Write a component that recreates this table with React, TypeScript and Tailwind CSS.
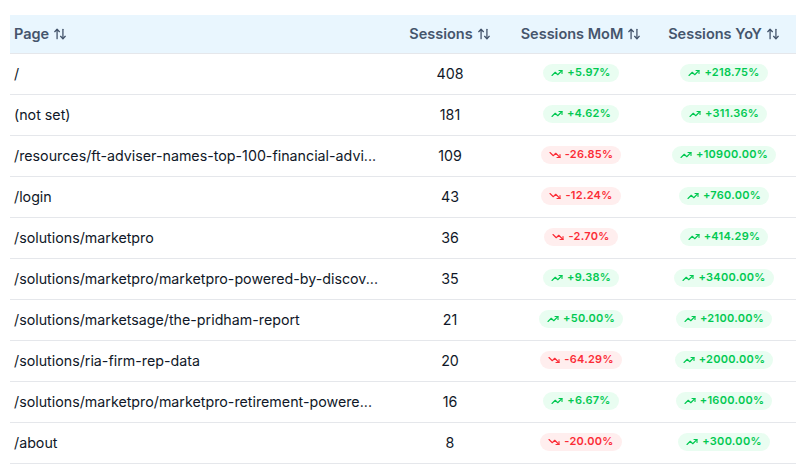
import React from 'react';
import { ArrowUpDown, TrendingUp, TrendingDown } from 'lucide-react';

interface Row {
  page: string;
  sessions: number;
  mom: number;
  yoy: number;
}

const rows: Row[] = [
  { page: '/', sessions: 408, mom: 5.97, yoy: 218.75 },
  { page: '(not set)', sessions: 181, mom: 4.62, yoy: 311.36 },
  { page: '/resources/ft-adviser-names-top-100-financial-advi...', sessions: 109, mom: -26.85, yoy: 10900 },
  { page: '/login', sessions: 43, mom: -12.24, yoy: 760 },
  { page: '/solutions/marketpro', sessions: 36, mom: -2.7, yoy: 414.29 },
  { page: '/solutions/marketpro/marketpro-powered-by-discov...', sessions: 35, mom: 9.38, yoy: 3400 },
  { page: '/solutions/marketsage/the-pridham-report', sessions: 21, mom: 50, yoy: 2100 },
  { page: '/solutions/ria-firm-rep-data', sessions: 20, mom: -64.29, yoy: 2000 },
  { page: '/solutions/marketpro/marketpro-retirement-powere...', sessions: 16, mom: 6.67, yoy: 1600 },
  { page: '/about', sessions: 8, mom: -20, yoy: 300 },
];

const Change = ({ value }: { value: number }) => {
  const up = value >= 0;
  return (
    <span
      className={`inline-flex items-center gap-1 rounded-full px-2 h-[18px] text-[11px] font-semibold tracking-wide leading-none ${
        up ? 'bg-green-100/60 text-green-500' : 'bg-red-100/60 text-red-500'
      }`}
    >
      {up ? <TrendingUp className="w-3 h-3" strokeWidth={2.25} /> : <TrendingDown className="w-3 h-3" strokeWidth={2.25} />}
      {up ? '+' : ''}
      {value.toFixed(2)}%
    </span>
  );
};

const Header = ({ label, align = 'center' }: { label: string; align?: 'left' | 'center' }) => (
  <th className={`px-1 font-semibold text-slate-600 ${align === 'left' ? 'text-left' : 'text-center'}`}>
    <span className="inline-flex items-center gap-1">
      {label}
      <ArrowUpDown className="w-3.5 h-3.5" strokeWidth={2.25} />
    </span>
  </th>
);

export default function App() {
  return (
    <div className="w-[810px] h-[468px] bg-white pt-[15px] pl-[10px] overflow-hidden" style={{ fontFamily: 'Inter, "Noto Sans", sans-serif' }}>
      <table className="w-[786px] table-fixed border-collapse text-[14.25px]">
        <colgroup>
          <col className="w-[380px]" />
          <col className="w-[120px]" />
          <col className="w-[142px]" />
          <col className="w-[144px]" />
        </colgroup>
        <thead>
          <tr className="h-[38px] bg-sky-100/70 border-b border-gray-200 text-[14.5px]">
            <Header label="Page" align="left" />
            <Header label="Sessions" />
            <Header label="Sessions MoM" />
            <Header label="Sessions YoY" />
          </tr>
        </thead>
        <tbody>
          {rows.map((r) => (
            <tr key={r.page} className="h-[41px] border-b border-gray-200 text-gray-900">
              <td className="px-1 whitespace-nowrap overflow-hidden">{r.page}</td>
              <td className="text-center">{r.sessions}</td>
              <td className="text-center">
                <Change value={r.mom} />
              </td>
              <td className="text-center">
                <Change value={r.yoy} />
              </td>
            </tr>
          ))}
        </tbody>
      </table>
    </div>
  );
}
